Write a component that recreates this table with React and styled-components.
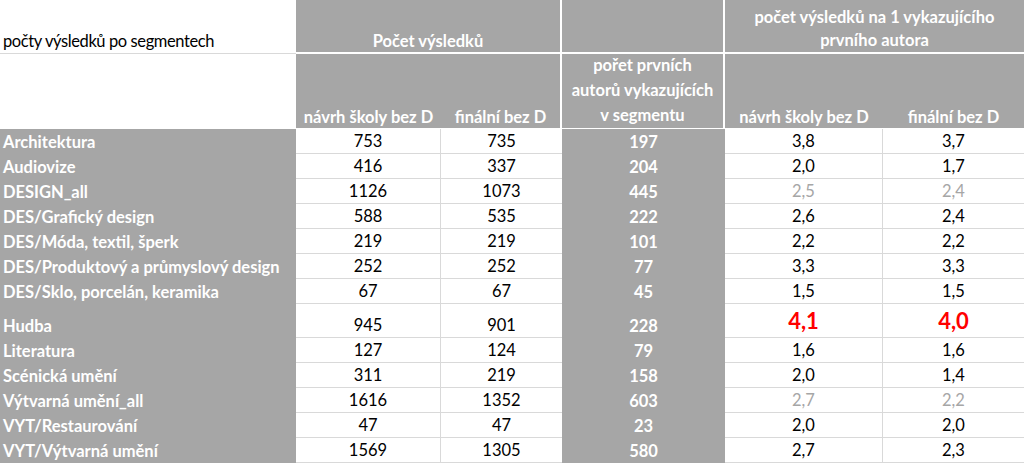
import React from 'react'
import styled, { createGlobalStyle } from 'styled-components'

const GlobalStyle = createGlobalStyle`
  html, body {
    margin: 0;
    padding: 0;
    background: #ffffff;
  }
  body {
    font-family: Lato, "Open Sans", "Liberation Sans", sans-serif;
    font-size: 16px;
  }
`

const GRAY = '#a6a6a6'
const GRID = '#d9d9d9'

const rows = [
  { name: 'Architektura', draft: 753, final: 735, authors: 197, r1: '3,8', r2: '3,7' },
  { name: 'Audiovize', draft: 416, final: 337, authors: 204, r1: '2,0', r2: '1,7' },
  { name: 'DESIGN_all', draft: 1126, final: 1073, authors: 445, r1: '2,5', r2: '2,4', muted: true },
  { name: 'DES/Grafický design', draft: 588, final: 535, authors: 222, r1: '2,6', r2: '2,4' },
  { name: 'DES/Móda, textil, šperk', draft: 219, final: 219, authors: 101, r1: '2,2', r2: '2,2' },
  { name: 'DES/Produktový a průmyslový design', draft: 252, final: 252, authors: 77, r1: '3,3', r2: '3,3' },
  { name: 'DES/Sklo, porcelán, keramika', draft: 67, final: 67, authors: 45, r1: '1,5', r2: '1,5' },
  { name: 'Hudba', draft: 945, final: 901, authors: 228, r1: '4,1', r2: '4,0', hot: true },
  { name: 'Literatura', draft: 127, final: 124, authors: 79, r1: '1,6', r2: '1,6' },
  { name: 'Scénická umění', draft: 311, final: 219, authors: 158, r1: '2,0', r2: '1,4' },
  { name: 'Výtvarná umění_all', draft: 1616, final: 1352, authors: 603, r1: '2,7', r2: '2,2', muted: true },
  { name: 'VYT/Restaurování', draft: 47, final: 47, authors: 23, r1: '2,0', r2: '2,0' },
  { name: 'VYT/Výtvarná umění', draft: 1569, final: 1305, authors: 580, r1: '2,7', r2: '2,3' },
]

function App() {
  return (
    <>
      <GlobalStyle />
      <Sheet $rows={rows.map((r) => (r.hot ? '34px' : '25px')).join(' ')}>
        <TitleCell>počty výsledků po segmentech</TitleCell>
        <HeadCell $span={2} $right>Počet výsledků</HeadCell>
        <HeadCell $right />
        <HeadCell $span={2} $lh={23}>
          počet výsledků na 1 vykazujícího
          <br />
          prvního autora
        </HeadCell>

        <BlankCell />
        <SubHeadCell>návrh školy bez D</SubHeadCell>
        <SubHeadCell $right>finální bez D</SubHeadCell>
        <SubHeadCell $right $lh={25}>
          pořet prvních
          <br />
          autorů vykazujících
          <br />
          v segmentu
        </SubHeadCell>
        <SubHeadCell>návrh školy bez D</SubHeadCell>
        <SubHeadCell>finální bez D</SubHeadCell>

        {rows.map((r) => (
          <React.Fragment key={r.name}>
            <LabelCell>{r.name}</LabelCell>
            <NumCell $line>{r.draft}</NumCell>
            <NumCell>{r.final}</NumCell>
            <AuthorsCell>{r.authors}</AuthorsCell>
            <RatioCell $line $muted={r.muted} $hot={r.hot}>{r.r1}</RatioCell>
            <RatioCell $muted={r.muted} $hot={r.hot}>{r.r2}</RatioCell>
          </React.Fragment>
        ))}
      </Sheet>
    </>
  )
}

export default App

const Sheet = styled.div`
  display: grid;
  width: 1024px;
  grid-template-columns: 296px 145px 121px 163px 158px 141px;
  grid-template-rows: 54px 75px ${(p) => p.$rows};
  color: #000;
  font-size: 16.5px;
  overflow: hidden;
`

const Cell = styled.div`
  box-sizing: border-box;
  display: flex;
  flex-direction: column;
  justify-content: flex-end;
  white-space: nowrap;
  overflow: hidden;
`

const TitleCell = styled(Cell)`
  padding: 0 0 1px 3px;
  line-height: 22px;
  letter-spacing: -0.4px;
  border-bottom: 1px solid ${GRID};
`

const BlankCell = styled(Cell)``

const HeadCell = styled(Cell)`
  grid-column: span ${(p) => p.$span || 1};
  background: ${GRAY};
  color: #fff;
  font-weight: 700;
  text-align: center;
  line-height: ${(p) => p.$lh || 22}px;
  padding-bottom: 0;
  border-bottom: 2px solid #fff;
  border-right: ${(p) => (p.$right ? '2px solid #fff' : 'none')};
`

const SubHeadCell = styled(Cell)`
  background: ${GRAY};
  color: #fff;
  font-weight: 700;
  text-align: center;
  line-height: ${(p) => p.$lh || 22}px;
  border-bottom: 1px solid #fff;
  border-right: ${(p) => (p.$right ? '2px solid #fff' : 'none')};
`

const LabelCell = styled(Cell)`
  background: ${GRAY};
  color: #fff;
  font-weight: 700;
  padding: 0 0 1px 3px;
  line-height: 22px;
`

const NumCell = styled(Cell)`
  text-align: center;
  line-height: 22px;
  padding-bottom: 1px;
  border-bottom: 1px solid ${GRID};
  border-right: ${(p) => (p.$line ? `1px solid ${GRID}` : 'none')};
`

const AuthorsCell = styled(Cell)`
  background: ${GRAY};
  color: #fff;
  font-weight: 700;
  text-align: center;
  line-height: 22px;
  padding-bottom: 1px;
`

const RatioCell = styled(NumCell)`
  color: ${(p) => (p.$hot ? '#ff0000' : p.$muted ? GRAY : '#000')};
  font-weight: ${(p) => (p.$hot ? 700 : 400)};
  font-size: ${(p) => (p.$hot ? '22px' : 'inherit')};
  line-height: ${(p) => (p.$hot ? '30px' : '22px')};
`
